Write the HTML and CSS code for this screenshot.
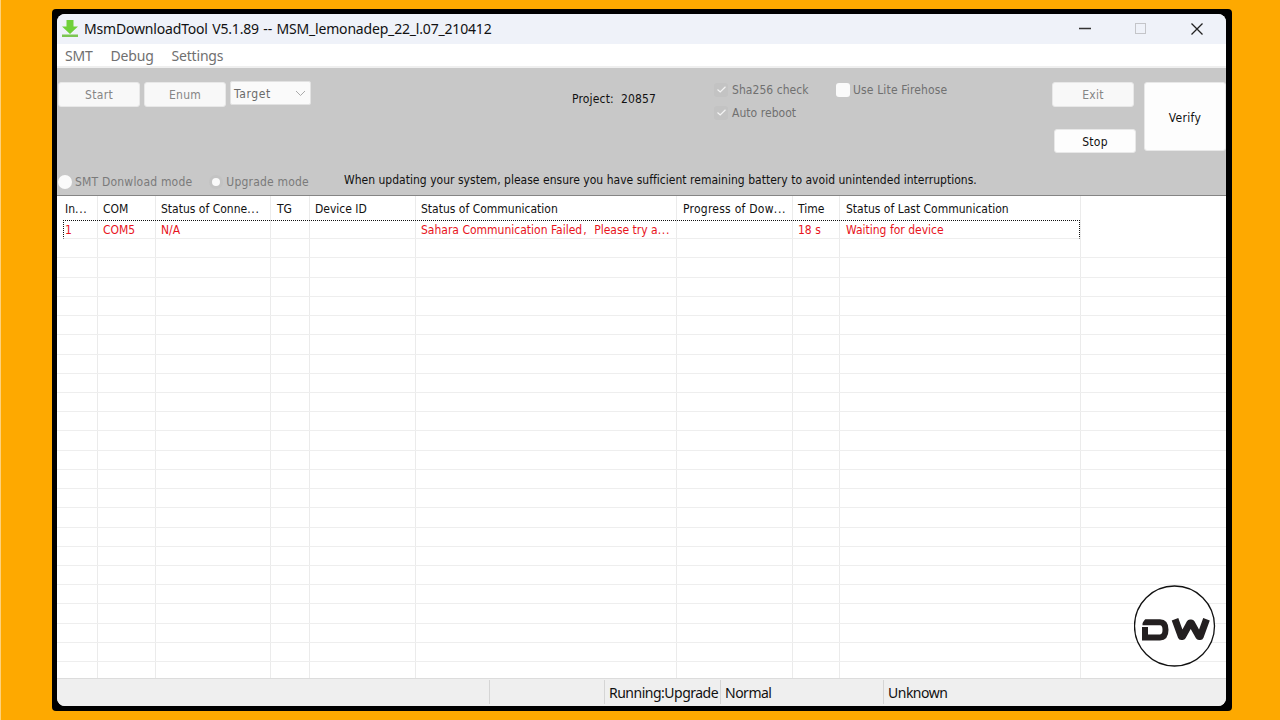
FILE: index.html
```html
<!DOCTYPE html>
<html lang="en">
<head>
    <meta charset="UTF-8">
    <meta name="viewport" content="width=device-width, initial-scale=1.0">
    <title>MsmDownloadTool V5.1.89</title>
    <link rel="stylesheet" href="styles.css">
</head>
<body>
    <div class="frame">
        <div class="window">
            <header class="titlebar">
                <svg class="app-icon" width="18" height="18" viewBox="0 0 18 18">
                    <path d="M5.500 0h7v6.500H17L9 14 1 6.500h4.500z" fill="#6fd03a"/>
                    <path d="M1 14.500h16V17H1z" fill="#7cc653"/>
                </svg>
                <h1 class="title">MsmDownloadTool V5.1.89 -- MSM_lemonadep_22_l.07_210412</h1>
                <div class="window-controls">
                    <svg width="14" height="14" viewBox="0 0 14 14"><path d="M1 6.500h12" stroke="#333" stroke-width="1.300"/></svg>
                    <svg width="14" height="14" viewBox="0 0 14 14"><rect x="1.500" y="1.500" width="10" height="10" fill="none" stroke="#c4c5c9"/></svg>
                    <svg width="14" height="14" viewBox="0 0 14 14"><path d="M1.500 1.500l11 11M12.500 1.500l-11 11" stroke="#222" stroke-width="1.300"/></svg>
                </div>
            </header>

            <nav class="menubar">
                <span>SMT</span>
                <span>Debug</span>
                <span>Settings</span>
            </nav>

            <section class="panel">
                <div class="toolbar">
                    <button class="btn start" disabled>Start</button>
                    <button class="btn enum" disabled>Enum</button>
                    <div class="select">
                        <span>Target</span>
                        <svg width="11" height="7" viewBox="0 0 11 7"><path d="M1 1l4.500 4.500L10 1" fill="none" stroke="#aaa"/></svg>
                    </div>
                    <div class="project"><span>Project:</span><span>20857</span></div>
                    <div class="checks">
                        <div class="check">
                            <span class="box checked"><svg width="9" height="7" viewBox="0 0 9 7"><path d="M.5 3.500L3.200 6 8.500.8" fill="none" stroke="#f4f4f4" stroke-width="1.200"/></svg></span>
                            <span>Sha256 check</span>
                        </div>
                        <div class="check">
                            <span class="box checked"><svg width="9" height="7" viewBox="0 0 9 7"><path d="M.5 3.500L3.200 6 8.500.8" fill="none" stroke="#f4f4f4" stroke-width="1.200"/></svg></span>
                            <span>Auto reboot</span>
                        </div>
                    </div>
                    <div class="check lite">
                        <span class="box"></span>
                        <span>Use Lite Firehose</span>
                    </div>
                    <div class="actions">
                        <button class="btn exit" disabled>Exit</button>
                        <button class="btn stop">Stop</button>
                    </div>
                    <button class="btn verify">Verify</button>
                </div>
                <div class="modes">
                    <span class="radio"></span>
                    <span class="mode">SMT Donwload mode</span>
                    <span class="radio on"></span>
                    <span class="mode">Upgrade mode</span>
                    <p class="notice">When updating your system, please ensure you have sufficient remaining battery to avoid unintended interruptions.</p>
                </div>
            </section>

            <main class="list">
                <div class="list-head">
                    <span>In<i class="dots">...</i></span>
                    <span>COM</span>
                    <span>Status of Conne<i class="dots">...</i></span>
                    <span>TG</span>
                    <span>Device ID</span>
                    <span>Status of Communication</span>
                    <span class="progress">Progress of Dow<i class="dots">...</i></span>
                    <span>Time</span>
                    <span>Status of Last Communication</span>
                </div>
                <div class="row device">
                    <span>1</span>
                    <span>COM5</span>
                    <span>N/A</span>
                    <span></span>
                    <span></span>
                    <span>Sahara Communication Failed<i class="comma">,</i>Please try a<i class="dots">...</i></span>
                    <span></span>
                    <span>18 s</span>
                    <span>Waiting for device</span>
                </div>
                <div class="row"></div>
                <div class="row"></div>
                <div class="row"></div>
                <div class="row"></div>
                <div class="row"></div>
                <div class="row"></div>
                <div class="row"></div>
                <div class="row"></div>
                <div class="row"></div>
                <div class="row"></div>
                <div class="row"></div>
                <div class="row"></div>
                <div class="row"></div>
                <div class="row"></div>
                <div class="row"></div>
                <div class="row"></div>
                <div class="row"></div>
                <div class="row"></div>
                <div class="row"></div>
                <div class="row"></div>
                <div class="row"></div>
                <div class="row"></div>
            </main>

            <footer class="statusbar">
                <span></span>
                <span></span>
                <span class="running">Running:Upgrade</span>
                <span>Normal</span>
                <span>Unknown</span>
            </footer>
        </div>
    </div>

    <svg class="badge" role="img" aria-label="DW" width="82" height="82" viewBox="0 0 82 82">
        <circle cx="40.500" cy="41" r="40" fill="#fff" stroke="#111" stroke-width="1.300"/>
        <g fill="none" stroke="#231f20">
            <path d="M8.500 37.200H26Q31.500 37.200 31.500 44.800T26 52.400H11V42" stroke-width="6"/>
            <path d="M41 34.300l6.300 17.300h1.200L56 38h1.400L65 51.600h1.200L72.500 34.300" stroke-width="7" stroke-linejoin="round"/>
        </g>
        <path d="M7 33h5l-5 7z" fill="#fff"/>
    </svg>
</body>
</html>
```

FILE: styles.css
```css
* {
    box-sizing: border-box;
    margin: 0;
    padding: 0;
}

body {
    width: 1280px;
    height: 720px;
    overflow: hidden;
    padding: 9px 48px 9px 51px;
    background-color: #fea900;
    border-left: 1px solid #fed27a;
    font-family: 'DejaVu Sans Condensed', 'DejaVu Sans', sans-serif;
    font-stretch: condensed;
    font-size: 12px;
    color: #111;
}

.frame {
    width: 1180px;
    height: 702px;
    padding: 5px 6px 5px 5px;
    background-color: #000;
    border-radius: 4px;
}

.window {
    display: flex;
    flex-direction: column;
    height: 692px;
    overflow: hidden;
    border-radius: 8px;
    background-color: #fff;
}

.titlebar {
    display: flex;
    align-items: center;
    height: 30px;
    padding: 0 22px 0 4px;
    background-color: #eff2f9;
}

.title {
    margin-left: 5px;
    font-family: 'Noto Sans', sans-serif;
    font-size: 14px;
    font-weight: 400;
    line-height: 30px;
    letter-spacing: -0.18px;
    word-spacing: 1px;
    white-space: nowrap;
}

.window-controls {
    display: flex;
    gap: 42px;
    margin-left: auto;
}

.menubar {
    display: flex;
    gap: 18px;
    height: 24px;
    padding-left: 8px;
    border-bottom: 2px solid #efefef;
    font-family: 'Noto Sans', sans-serif;
    font-size: 14px;
    line-height: 24px;
    letter-spacing: -0.2px;
    color: #707070;
}

.panel {
    height: 128px;
    background-color: #c8c8c8;
    border-bottom: 1px solid #858585;
}

.toolbar {
    display: grid;
    grid-template-columns: 86px 86px 342px 142px 122px 216px 92px 82px;
    align-items: start;
    height: 101px;
    padding-left: 1px;
    padding-top: 13px;
}

.btn {
    width: 82px;
    height: 25px;
    padding-top: 1px;
    border: 1px solid #e8e8e8;
    border-radius: 3px;
    background-color: #fdfdfd;
    font: inherit;
    letter-spacing: 0.3px;
    color: #111;
}

.btn:disabled {
    background-color: #f8f8f8;
    color: #858585;
}

.start,
.enum {
    margin-top: 1px;
}

.select {
    display: flex;
    align-items: center;
    justify-content: space-between;
    width: 81px;
    height: 24px;
    padding: 1px 4px 0 3px;
    border: 1px solid #e2e2e2;
    border-radius: 2px;
    background-color: #fafafa;
    letter-spacing: 0.6px;
    color: #6a6a6a;
}

.project {
    display: flex;
    gap: 7px;
    margin-top: 11px;
    letter-spacing: 0.17px;
}

.checks {
    display: flex;
    flex-direction: column;
    gap: 8px;
    margin-top: 1px;
}

.check {
    display: flex;
    align-items: center;
    gap: 4px;
    height: 15px;
    color: #707070;
    letter-spacing: 0.05px;
    white-space: nowrap;
}

.lite {
    gap: 3px;
    margin-top: 1px;
    letter-spacing: 0.15px;
}

.box {
    display: flex;
    align-items: center;
    justify-content: center;
    width: 14px;
    height: 14px;
    border-radius: 3px;
    background-color: #fafafa;
}

.box.checked {
    background-color: #c3c3c3;
}

.actions {
    display: flex;
    flex-direction: column;
    gap: 22px;
    margin-top: 1px;
}

.stop {
    height: 24px;
    margin-left: 2px;
}

.verify {
    height: 69px;
    margin-top: 1px;
    padding-top: 3px;
}

.modes {
    display: flex;
    align-items: center;
    height: 26px;
    color: #7a7a7a;
    white-space: nowrap;
}

.mode {
    letter-spacing: 0.2px;
}

.radio {
    width: 14px;
    height: 14px;
    margin-left: 1px;
    margin-right: 3px;
    border-radius: 50%;
    background-color: #fafafa;
}

.radio.on {
    margin-left: 17px;
    border: 3px solid #c3c3c3;
}

.notice {
    margin-left: 35px;
    margin-bottom: 4px;
    letter-spacing: 0.02px;
    color: #111;
}

/* the column lines run down the whole list */
.list {
    height: 482px;
    overflow: hidden;
    background-image:
        linear-gradient(#ebebeb, #ebebeb), linear-gradient(#ebebeb, #ebebeb),
        linear-gradient(#ebebeb, #ebebeb), linear-gradient(#ebebeb, #ebebeb),
        linear-gradient(#ebebeb, #ebebeb), linear-gradient(#ebebeb, #ebebeb),
        linear-gradient(#ebebeb, #ebebeb), linear-gradient(#ebebeb, #ebebeb),
        linear-gradient(#ebebeb, #ebebeb);
    background-size: 1px 100%;
    background-repeat: no-repeat;
    background-position: 40px 0, 98px 0, 213px 0, 252px 0, 358px 0, 619px 0, 735px 0, 782px 0, 1023px 0;
}

.list-head,
.device {
    display: grid;
    grid-template-columns: 38px 58px 116px 38px 106px 262px 115px 48px 234px;
    white-space: nowrap;
}

.list-head {
    height: 24px;
    padding-left: 8px;
    line-height: 26px;
}

.progress {
    letter-spacing: 0.25px;
}

.dots {
    font-style: normal;
    letter-spacing: 0.7px;
}

.comma {
    display: inline-block;
    width: 12px;
    padding-left: 1px;
    font-style: normal;
}

.row {
    height: 19.23px;
    border-bottom: 1px solid #eee;
}

.device {
    width: 1017px;
    margin-left: 6px;
    padding-left: 2px;
    border: 1px dotted #111;
    border-bottom: 1px solid #eee;
    line-height: 19px;
    color: #e8141c;
}

.device span {
    margin-left: -1px;
}

.statusbar {
    display: grid;
    grid-template-columns: 432px 115px 116px 163px 1fr;
    height: 28px;
    padding-top: 1px;
    background-color: #efefef;
    border-top: 1px solid #dcdcdc;
    font-family: 'Noto Sans', sans-serif;
    font-size: 14px;
    line-height: 25px;
    letter-spacing: -0.5px;
}

.statusbar span {
    height: 24px;
    padding-left: 4px;
    border-left: 1px solid #d5d5d5;
}

.statusbar span:first-child {
    border-left: none;
}

.badge {
    position: absolute;
    left: 1134px;
    top: 585px;
}
```
